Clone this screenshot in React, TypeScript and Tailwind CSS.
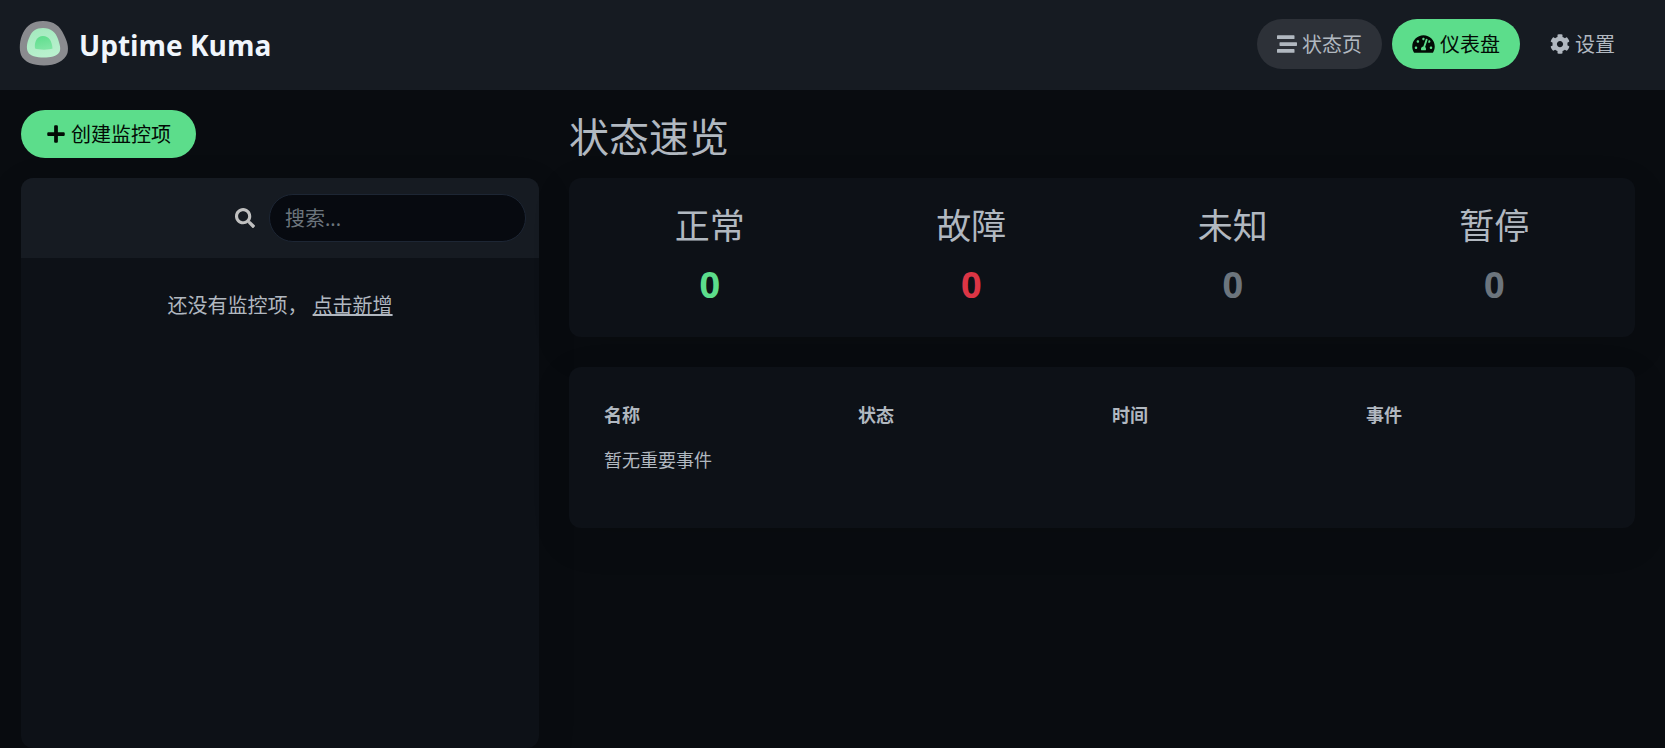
import { FaCog, FaPlus, FaSearch, FaStream, FaTachometerAlt } from "react-icons/fa";

type Stat = { label: string; value: number; color: string };

const STATS: Stat[] = [
  { label: "正常", value: 0, color: "text-[#5cdd8b]" },
  { label: "故障", value: 0, color: "text-[#dc3545]" },
  { label: "未知", value: 0, color: "text-[#6c757d]" },
  { label: "暂停", value: 0, color: "text-[#6c757d]" },
];

const COLUMNS = ["名称", "状态", "时间", "事件"];

function Logo() {
  return (
    <svg viewBox="0 0 50 50" className="size-[50px]" aria-hidden="true">
      <defs>
        <linearGradient id="mid" x1="0" y1="0" x2="0.3" y2="1">
          <stop offset="0" stopColor="#a2e9bd" />
          <stop offset="1" stopColor="#b8f0cd" />
        </linearGradient>
        <linearGradient id="core" x1="0" y1="0" x2="0.3" y2="1">
          <stop offset="0" stopColor="#5cdd8b" />
          <stop offset="1" stopColor="#7ee5a3" />
        </linearGradient>
      </defs>
      <path
        d="M24 2C35 2 41 7 45 16C48 22 50 28 48.500 34C46 42 36 46.500 25 46.500C14 46.500 5 43 2 36C0 30 .5 21 4 14C8 6 14 2 24 2Z"
        fill="#8a8b8f"
      />
      <path
        d="M24 9C32 9 36.500 13 39 20C41 26 42 30 40.500 33C38 37.500 31 38.500 25 38.500C17 38.500 11 37 9 33C7 29 8 23 10.500 18C13 12 17 9 24 9Z"
        fill="url(#mid)"
      />
      <path
        d="M24 17C30 17 33 22 33.500 29.500C30 31 20 31 16 29.500C15 23 18 17 24 17Z"
        fill="url(#core)"
      />
    </svg>
  );
}

function Header() {
  return (
    <header className="flex h-[90px] items-center justify-between bg-[#161b22] pb-0.5 pl-[19px] pr-[30px]">
      <a href="#" className="flex items-center gap-2.5 text-[#f0f6fc]">
        <Logo />
        <span className="pt-0.5 font-['Open_Sans'] text-[28px] font-bold leading-9">Uptime Kuma</span>
      </a>
      <nav className="flex items-center gap-2.5">
        <a href="#status" className="flex h-[50px] items-center gap-[5px] rounded-full bg-[#2d3138] px-5">
          <FaStream />
          <span className="pt-0.5">状态页</span>
        </a>
        <a
          href="#dashboard"
          className="flex h-[50px] items-center gap-[5px] rounded-full bg-[#5cdd8b] px-5 text-[#020b05]"
        >
          <FaTachometerAlt className="w-[23px]" />
          <span className="pt-0.5">仪表盘</span>
        </a>
        <a href="#settings" className="flex h-[50px] items-center gap-[5px] rounded-full px-5">
          <FaCog />
          <span className="pt-0.5">设置</span>
        </a>
      </nav>
    </header>
  );
}

function MonitorList() {
  return (
    <section className="flex flex-col">
      <button
        type="button"
        className="flex h-12 items-center gap-[5px] self-start rounded-full bg-[#5cdd8b] px-[25px] text-[#020b05]"
      >
        <FaPlus />
        <span className="pt-0.5">创建监控项</span>
      </button>
      <div className="mt-5 flex-1 overflow-hidden rounded-[12px] bg-[#0d1117] shadow-[0_12px_40px_rgba(0,0,0,0.1)]">
        <div className="flex h-20 items-center justify-end gap-3.5 bg-[#161b22] px-[13px]">
          <label htmlFor="search" aria-label="搜索" className="text-[#c0c0c0]">
            <FaSearch />
          </label>
          <input
            id="search"
            type="text"
            placeholder="搜索..."
            className="h-12 w-[257px] rounded-full border border-[#1d2634] bg-[#070a10] px-[15px] placeholder:text-[#6c757d]"
          />
        </div>
        <p className="mt-[34px] text-center">
          还没有监控项， <a href="#add" className="underline decoration-2">点击新增</a>
        </p>
      </div>
    </section>
  );
}

function QuickStats() {
  return (
    <div className="grid grid-cols-4 rounded-[12px] bg-[#0d1117] px-2.5 pb-[26px] pt-[26px] text-center shadow-[0_12px_40px_rgba(0,0,0,0.1)]">
      {STATS.map((s) => (
        <div key={s.label}>
          <h3 className="text-[35px] leading-[44px]">{s.label}</h3>
          <span className={"mt-[11px] block font-['Open_Sans'] text-[36px] font-bold leading-[52px] " + s.color}>
            {s.value}
          </span>
        </div>
      ))}
    </div>
  );
}

function EventTable() {
  return (
    <div className="mt-[30px] rounded-[12px] bg-[#0d1117] px-[25px] pb-[45px] pt-[25px] shadow-[0_12px_40px_rgba(0,0,0,0.1)]">
      <table className="w-full table-fixed text-left text-lg leading-[26px]">
        <thead>
          <tr>
            {COLUMNS.map((c) => (
              <th key={c} className="px-2.5 pb-[9px] pt-2.5 font-bold">
                {c}
              </th>
            ))}
          </tr>
        </thead>
        <tbody>
          <tr>
            <td colSpan={4} className="px-2.5 py-2.5">
              暂无重要事件
            </td>
          </tr>
        </tbody>
      </table>
    </div>
  );
}

export default function App() {
  return (
    <div className="flex min-h-screen flex-col bg-[#090c10] font-['Noto_Sans','Noto_Sans_CJK_SC',sans-serif] text-xl text-[#b1b8c0]">
      <Header />
      <main className="grid flex-1 grid-cols-3 gap-[30px] pl-[21px] pr-[30px] pt-5">
        <MonitorList />
        <section className="col-span-2">
          <h1 className="mb-4 pt-0.5 text-[40px] leading-[50px]">状态速览</h1>
          <QuickStats />
          <EventTable />
        </section>
      </main>
    </div>
  );
}
